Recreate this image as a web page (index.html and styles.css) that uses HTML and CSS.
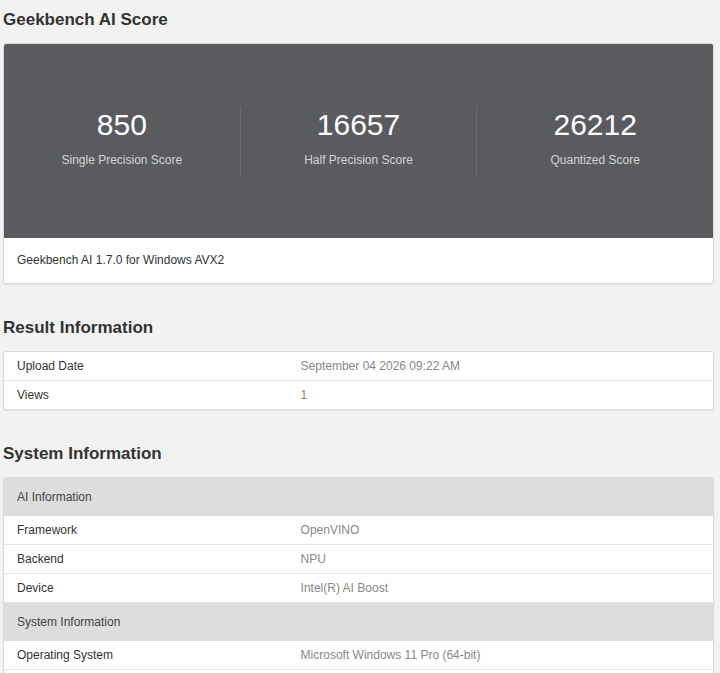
FILE: index.html
```html
<!DOCTYPE html>
<html lang="en">
<head>
    <meta charset="UTF-8">
    <meta name="viewport" content="width=device-width, initial-scale=1.0">
    <title>Geekbench AI Score</title>
    <link rel="stylesheet" href="styles.css">
</head>
<body>
    <div class="page">
        <h2 class="section-title first">Geekbench AI Score</h2>

        <div class="card score-card">
            <div class="scores">
                <div class="score">
                    <div class="score-value">850</div>
                    <div class="score-label">Single Precision Score</div>
                </div>
                <div class="score">
                    <div class="score-value">16657</div>
                    <div class="score-label">Half Precision Score</div>
                </div>
                <div class="score">
                    <div class="score-value">26212</div>
                    <div class="score-label">Quantized Score</div>
                </div>
            </div>
            <div class="score-footer">Geekbench AI 1.7.0 for Windows AVX2</div>
        </div>

        <h2 class="section-title">Result Information</h2>

        <div class="card">
            <table class="info-table">
                <tr>
                    <td class="name">Upload Date</td>
                    <td class="value">September 04 2026 09:22 AM</td>
                </tr>
                <tr>
                    <td class="name">Views</td>
                    <td class="value">1</td>
                </tr>
            </table>
        </div>

        <h2 class="section-title">System Information</h2>

        <div class="card continued">
            <table class="info-table">
                <tr class="group">
                    <td colspan="2">AI Information</td>
                </tr>
                <tr>
                    <td class="name">Framework</td>
                    <td class="value">OpenVINO</td>
                </tr>
                <tr>
                    <td class="name">Backend</td>
                    <td class="value">NPU</td>
                </tr>
                <tr>
                    <td class="name">Device</td>
                    <td class="value">Intel(R) AI Boost</td>
                </tr>
                <tr class="group">
                    <td colspan="2">System Information</td>
                </tr>
                <tr>
                    <td class="name">Operating System</td>
                    <td class="value">Microsoft Windows 11 Pro (64-bit)</td>
                </tr>
            </table>
        </div>
    </div>
</body>
</html>
```

FILE: styles.css
```css
body {
    margin: 0;
    background-color: #f2f2f2;
    font-family: "Liberation Sans", Arial, sans-serif;
    font-size: 12px;
    color: #333;
}
.page {
    padding: 0 6px 20px 3px;
}
.section-title {
    font-size: 17px;
    font-weight: bold;
    line-height: 20px;
    color: #333;
    margin: 34px 0 13px;
}
.section-title.first {
    margin-top: 0;
    padding-top: 10px;
}
.card {
    background-color: white;
    border: 1px solid #dadada;
    border-radius: 3px;
    box-shadow: 0 1px 2px rgba(0,0,0,0.06);
    overflow: hidden;
}
.card.continued {
    padding-bottom: 28px;
}
.scores {
    display: flex;
    background-color: #5a5b5f;
    padding: 62px 0;
}
.score {
    flex: 1;
    text-align: center;
    padding: 2px 0 8px;
    border-left: 1px solid #6b6c70;
}
.score:first-child {
    border-left: none;
}
.score-value {
    font-size: 30px;
    line-height: 34px;
    color: #fff;
}
.score-label {
    margin-top: 10px;
    font-size: 12px;
    line-height: 16px;
    color: #d4d4d6;
}
.score-footer {
    line-height: 45px;
    padding: 0 13px;
    color: #333;
}
.info-table {
    width: 100%;
    border-collapse: collapse;
}
.info-table td {
    padding: 6px 13px;
    line-height: 16px;
    border-bottom: 1px solid #e6e6e6;
}
.info-table tr:last-child td {
    border-bottom: none;
}
.continued .info-table tr:last-child td {
    border-bottom: 1px solid #e6e6e6;
}
.info-table .name {
    width: 40%;
    color: #333;
}
.info-table .value {
    color: #888;
}
.info-table .group td {
    background-color: #dddddd;
    color: #444;
    padding: 11px 13px;
    border-bottom: none;
}
```
